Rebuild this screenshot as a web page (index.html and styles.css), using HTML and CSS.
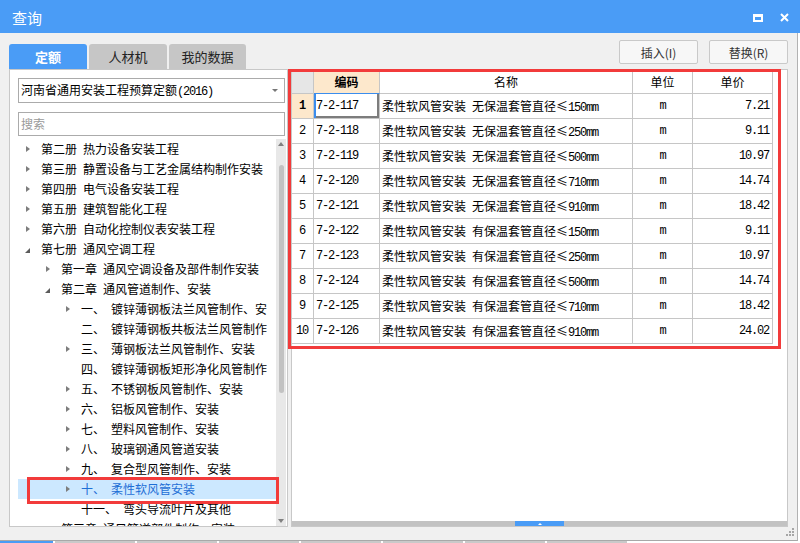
FILE: index.html
```html
<!DOCTYPE html>
<html lang="zh-CN">
<head>
<meta charset="utf-8">
<title>查询</title>
<link rel="stylesheet" href="styles.css">
</head>
<body>
<div class="window">
  <div class="titlebar">
    <span class="title">查询</span>
    <div class="controls">
      <span class="max"></span>
      <svg class="close" width="9" height="9" viewBox="0 0 9 9"><path d="M1 1 L8 8 M8 1 L1 8" stroke="#fff" stroke-width="2" fill="none"/></svg>
    </div>
  </div>
  <div class="frame">
    <div class="toolbar">
      <div class="tabs">
        <div class="tab active">定额</div>
        <div class="tab">人材机</div>
        <div class="tab">我的数据</div>
      </div>
      <div class="buttons">
        <button class="btn">插入(I)</button>
        <button class="btn">替换(R)</button>
      </div>
    </div>
    <div class="content">
      <div class="left">
        <div class="select"><span>河南省通用安装工程预算定额<span class="m">(2016)</span></span><i class="caret"></i></div>
        <div class="search">搜索</div>
        <div class="treewrap">
          <div class="tree">
            <div class="node l1"><i class="arr r"></i><span><span class="num">第二册</span>热力设备安装工程</span></div>
            <div class="node l1"><i class="arr r"></i><span><span class="num">第三册</span>静置设备与工艺金属结构制作安装</span></div>
            <div class="node l1"><i class="arr r"></i><span><span class="num">第四册</span>电气设备安装工程</span></div>
            <div class="node l1"><i class="arr r"></i><span><span class="num">第五册</span>建筑智能化工程</span></div>
            <div class="node l1"><i class="arr r"></i><span><span class="num">第六册</span>自动化控制仪表安装工程</span></div>
            <div class="node l1"><i class="arr d"></i><span><span class="num">第七册</span>通风空调工程</span></div>
            <div class="node l2"><i class="arr r"></i><span><span class="num">第一章</span>通风空调设备及部件制作安装</span></div>
            <div class="node l2"><i class="arr d"></i><span><span class="num">第二章</span>通风管道制作、安装</span></div>
            <div class="node l3"><i class="arr r"></i><span><span class="num">一、</span>镀锌薄钢板法兰风管制作、安</span></div>
            <div class="node l3"><i class="arr"></i><span><span class="num">二、</span>镀锌薄钢板共板法兰风管制作</span></div>
            <div class="node l3"><i class="arr r"></i><span><span class="num">三、</span>薄钢板法兰风管制作、安装</span></div>
            <div class="node l3"><i class="arr"></i><span><span class="num">四、</span>镀锌薄钢板矩形净化风管制作</span></div>
            <div class="node l3"><i class="arr r"></i><span><span class="num">五、</span>不锈钢板风管制作、安装</span></div>
            <div class="node l3"><i class="arr r"></i><span><span class="num">六、</span>铝板风管制作、安装</span></div>
            <div class="node l3"><i class="arr r"></i><span><span class="num">七、</span>塑料风管制作、安装</span></div>
            <div class="node l3"><i class="arr r"></i><span><span class="num">八、</span>玻璃钢通风管道安装</span></div>
            <div class="node l3"><i class="arr r"></i><span><span class="num">九、</span>复合型风管制作、安装</span></div>
            <div class="node l3 sel"><i class="arr r"></i><span><span class="num">十、</span>柔性软风管安装</span></div>
            <div class="node l3"><i class="arr"></i><span><span class="num">十一、</span>弯头导流叶片及其他</span></div>
            <div class="node l2"><i class="arr"></i><span><span class="num">第三章</span>通风管道部件制作、安装</span></div>
          </div>
          <div class="vscroll">
            <i class="up"></i>
            <div class="vthumb"></div>
            <div class="vspace"></div>
            <i class="down"></i>
          </div>
        </div>
      </div>
      <div class="right">
        <div class="grid">
          <div class="row head">
            <div class="c corner"></div>
            <div class="c hcode">编码</div>
            <div class="c ctr">名称</div>
            <div class="c ctr">单位</div>
            <div class="c ctr">单价</div>
          </div>
          <div class="row">
            <div class="c rn cur m">1</div>
            <div class="c code m focus">7-2-117</div>
            <div class="c name">柔性软风管安装<span class="m"> </span>无保温套管直径≤<span class="m">150mm</span></div>
            <div class="c ctr m">m</div>
            <div class="c price m">7.21</div>
          </div>
          <div class="row">
            <div class="c rn m">2</div>
            <div class="c code m">7-2-118</div>
            <div class="c name">柔性软风管安装<span class="m"> </span>无保温套管直径≤<span class="m">250mm</span></div>
            <div class="c ctr m">m</div>
            <div class="c price m">9.11</div>
          </div>
          <div class="row">
            <div class="c rn m">3</div>
            <div class="c code m">7-2-119</div>
            <div class="c name">柔性软风管安装<span class="m"> </span>无保温套管直径≤<span class="m">500mm</span></div>
            <div class="c ctr m">m</div>
            <div class="c price m">10.97</div>
          </div>
          <div class="row">
            <div class="c rn m">4</div>
            <div class="c code m">7-2-120</div>
            <div class="c name">柔性软风管安装<span class="m"> </span>无保温套管直径≤<span class="m">710mm</span></div>
            <div class="c ctr m">m</div>
            <div class="c price m">14.74</div>
          </div>
          <div class="row">
            <div class="c rn m">5</div>
            <div class="c code m">7-2-121</div>
            <div class="c name">柔性软风管安装<span class="m"> </span>无保温套管直径≤<span class="m">910mm</span></div>
            <div class="c ctr m">m</div>
            <div class="c price m">18.42</div>
          </div>
          <div class="row">
            <div class="c rn m">6</div>
            <div class="c code m">7-2-122</div>
            <div class="c name">柔性软风管安装<span class="m"> </span>有保温套管直径≤<span class="m">150mm</span></div>
            <div class="c ctr m">m</div>
            <div class="c price m">9.11</div>
          </div>
          <div class="row">
            <div class="c rn m">7</div>
            <div class="c code m">7-2-123</div>
            <div class="c name">柔性软风管安装<span class="m"> </span>有保温套管直径≤<span class="m">250mm</span></div>
            <div class="c ctr m">m</div>
            <div class="c price m">10.97</div>
          </div>
          <div class="row">
            <div class="c rn m">8</div>
            <div class="c code m">7-2-124</div>
            <div class="c name">柔性软风管安装<span class="m"> </span>有保温套管直径≤<span class="m">500mm</span></div>
            <div class="c ctr m">m</div>
            <div class="c price m">14.74</div>
          </div>
          <div class="row">
            <div class="c rn m">9</div>
            <div class="c code m">7-2-125</div>
            <div class="c name">柔性软风管安装<span class="m"> </span>有保温套管直径≤<span class="m">710mm</span></div>
            <div class="c ctr m">m</div>
            <div class="c price m">18.42</div>
          </div>
          <div class="row">
            <div class="c rn m">10</div>
            <div class="c code m">7-2-126</div>
            <div class="c name">柔性软风管安装<span class="m"> </span>有保温套管直径≤<span class="m">910mm</span></div>
            <div class="c ctr m">m</div>
            <div class="c price m">24.02</div>
          </div>
        </div>
        <div class="hscroll"><div class="hthumb"></div></div>
      </div>
      <div class="mark mark-table"></div>
      <div class="mark mark-tree"></div>
    </div>
    <div class="footer">
      <svg class="grip" width="9" height="9" viewBox="0 0 9 9">
        <rect x="6" y="0" width="2" height="2" fill="#a6a6a6"/>
        <rect x="3" y="3" width="2" height="2" fill="#a6a6a6"/>
        <rect x="6" y="3" width="2" height="2" fill="#a6a6a6"/>
        <rect x="0" y="6" width="2" height="2" fill="#a6a6a6"/>
        <rect x="3" y="6" width="2" height="2" fill="#a6a6a6"/>
        <rect x="6" y="6" width="2" height="2" fill="#a6a6a6"/>
      </svg>
    </div>
  </div>
  <div class="under">
    <span class="seg blue"></span>
    <span class="seg"></span>
    <span class="seg"></span>
    <span class="seg"></span>
    <span class="seg"></span>
    <span class="seg"></span>
    <span class="seg"></span>
    <span class="seg"></span>
  </div>
</div>
</body>
</html>
```

FILE: styles.css
```css
* { box-sizing: border-box; }
html, body { margin: 0; padding: 0; }
body {
  width: 800px;
  height: 543px;
  overflow: hidden;
  background: #ffffff;
  font-family: "Noto Sans CJK SC", "Noto Sans", sans-serif;
  font-size: 12px;
  color: #000;
}
.m {
  font-family: "Liberation Mono", "Noto Sans CJK SC", monospace;
  font-size: 12px;
  letter-spacing: -1.2px;
}
.window { display: flex; flex-direction: column; height: 543px; }

/* title bar */
.titlebar {
  height: 33px;
  flex: none;
  background: #4a9cf6;
  color: #fff;
  display: flex;
  align-items: center;
  padding: 2px 11px 0 12px;
}
.title { flex: 1; font-size: 15px; line-height: 1; }
.controls { display: flex; align-items: center; gap: 17px; }
.max {
  width: 10px;
  height: 8px;
  border: 2px solid #fff;
  border-top-width: 3px;
}
.close { display: block; }

/* frame */
.frame {
  width: 798px;
  height: 508px;
  flex: none;
  background: #f0f0f0;
  border-right: 1px solid #b2b2b2;
  border-bottom: 1px solid #a8a8a8;
  display: flex;
  flex-direction: column;
}
.toolbar {
  height: 36px;
  flex: none;
  padding: 7px 9px 0 9px;
  display: flex;
  justify-content: space-between;
}
.tabs { display: flex; align-self: flex-end; gap: 2px; }
.tab {
  width: 78px;
  height: 25px;
  border-radius: 3px 3px 0 0;
  background: #c6c6c6;
  color: #222;
  font-size: 13px;
  display: flex;
  align-items: center;
  justify-content: center;
}
.tab:last-child { width: 77px; }
.tab.active { background: #4a9cf6; color: #fff; font-weight: bold; }
.buttons { display: flex; gap: 11px; align-items: flex-start; }
.btn {
  width: 79px;
  height: 24px;
  background: #f7f7f7;
  border: 1px solid #c9c9c9;
  border-radius: 2px;
  font-family: "Noto Sans CJK SC", "Noto Sans", sans-serif;
  font-size: 12px;
  color: #333;
  padding: 0;
}

/* content */
.content {
  height: 458px;
  flex: none;
  display: flex;
  gap: 3px;
  padding: 0 9px;
  position: relative;
}
.left {
  width: 279px;
  background: #fff;
  border: 1px solid #c8c8c8;
  padding: 8px 1px 0 8px;
  display: flex;
  flex-direction: column;
}
.select {
  height: 25px;
  flex: none;
  margin-right: 1px;
  border: 1px solid #ababab;
  display: flex;
  align-items: center;
  justify-content: space-between;
  padding: 0 6px 0 2px;
  line-height: 1;
}
.caret {
  width: 0; height: 0;
  border-top: 3px solid #777;
  border-left: 3px solid transparent;
  border-right: 3px solid transparent;
}
.search {
  height: 24px;
  flex: none;
  margin: 9px 1px 0 0;
  border: 1px solid #ababab;
  color: #9a9a9a;
  padding-left: 2px;
  line-height: 22px;
}
.treewrap {
  flex: 1;
  min-height: 0;
  margin-top: 3px;
  display: flex;
}
.tree { flex: 1; overflow: hidden; }
.node {
  height: 20px;
  display: flex;
  align-items: center;
  white-space: nowrap;
  line-height: 20px;
}
.l1 { padding-left: 8px; }
.l2 { padding-left: 28px; }
.l3 { padding-left: 48px; }
.arr { flex: none; width: 15px; height: 20px; display: flex; align-items: center; }
.arr.r::before {
  content: "";
  width: 0; height: 0;
  border-left: 4px solid #7d7d7d;
  border-top: 3.5px solid transparent;
  border-bottom: 3.5px solid transparent;
}
.arr.d::before {
  content: "";
  width: 0; height: 0;
  margin-left: -1px;
  margin-top: 2px;
  border-bottom: 5px solid #5c5c5c;
  border-left: 5px solid transparent;
}
.num { margin-right: 6px; }
.sel { background: #cce8ff; color: #1f6fd6; }

.vscroll {
  width: 10px;
  flex: none;
  background: #e8e8e8;
  display: flex;
  flex-direction: column;
  align-items: center;
  padding: 3px 0 3px;
}
.up {
  width: 0; height: 0;
  border-bottom: 4px solid #808080;
  border-left: 3.5px solid transparent;
  border-right: 3.5px solid transparent;
}
.vthumb {
  width: 5px;
  height: 228px;
  margin-top: 19px;
  border-radius: 3px;
  background: #c2c2c2;
}
.vspace { flex: 1; }
.down {
  width: 0; height: 0;
  border-top: 4px solid #808080;
  border-left: 3.5px solid transparent;
  border-right: 3.5px solid transparent;
}

/* right table */
.right {
  width: 497px;
  background: #fff;
  border: 1px solid #c8c8c8;
  display: flex;
  flex-direction: column;
}
.row {
  display: grid;
  grid-template-columns: 22px 66px 253px 60px 80px;
  height: 25px;
}
.row.head { height: 24px; }
.c {
  border-right: 1px solid #c6c6c6;
  border-bottom: 1px solid #c6c6c6;
  line-height: 24px;
  white-space: nowrap;
  overflow: hidden;
}
.head .c { line-height: 23px; }
.corner { background: #e6e6e6; }
.hcode {
  background: #fde8cc;
  font-weight: bold;
  text-align: center;
  border-bottom: 1px solid #3b8ded;
}
.ctr { text-align: center; }
.rn { text-align: center; padding-right: 1px; }
.rn.cur { background: #fde8cc; font-weight: bold; }
.code { padding-left: 2px; }
.name { padding-left: 2px; }
.price { text-align: right; padding-right: 3px; }
.focus {
  box-shadow: inset 2px 0 0 #3b8ded, inset -2px -2px 0 #7d7d7d;
}
.hscroll {
  margin-top: auto;
  height: 5px;
  background: #c2c2c2;
  display: flex;
}
.hthumb {
  margin-left: 223px;
  width: 49px;
  height: 5px;
  background: #4a9cf6;
  display: flex;
  justify-content: center;
  align-items: center;
}
.hthumb::after {
  content: "";
  width: 0; height: 0;
  border-bottom: 2px solid #fff;
  border-left: 2px solid transparent;
  border-right: 2px solid transparent;
}

/* annotation marks */
.mark {
  position: absolute;
  border: 3px solid #f23b3b;
  pointer-events: none;
}
.mark-table { left: 288px; top: 0; width: 493px; height: 280px; }
.mark-tree { left: 27px; top: 408px; width: 252px; height: 27px; }

/* footer */
.footer {
  flex: 1;
  display: flex;
  justify-content: flex-end;
  align-items: flex-end;
  padding: 0 2px 3px 0;
}
.grip { display: block; }

/* underlying strip */
.under {
  flex: 1;
  display: flex;
  gap: 2px;
  background: #fff;
}
.seg { width: 80px; background: #c9c9c9; }
.seg.blue { width: 53px; background: #4a9cf6; }
```
